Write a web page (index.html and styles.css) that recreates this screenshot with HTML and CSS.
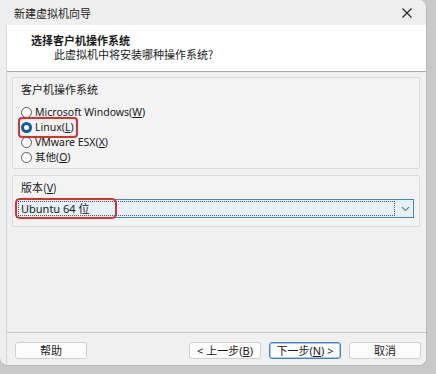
FILE: index.html
```html
<!DOCTYPE html>
<html lang="zh-CN">
<head>
<meta charset="utf-8">
<title>新建虚拟机向导</title>
<link rel="stylesheet" href="styles.css">
</head>
<body>
<div class="window">
  <div class="titlebar">
    <span class="title">新建虚拟机向导</span>
    <svg class="close" width="10" height="10" viewBox="0 0 10 10"><path d="M0.5 0.5L9.5 9.5M9.5 0.5L0.5 9.5" stroke="#222" stroke-width="1.1" fill="none"/></svg>
  </div>
  <div class="client">
    <div class="header">
      <div class="h-title">选择客户机操作系统</div>
      <div class="h-sub">此虚拟机中将安装哪种操作系统?</div>
    </div>
    <div class="content">
      <div class="group g-os">
        <div class="glabel">客户机操作系统</div>
        <div class="radios">
          <div class="radio"><span class="dot"></span><span>Microsoft Windows(<u>W</u>)</span></div>
          <div class="radio mark"><span class="dot on"></span><span>Linux(<u>L</u>)</span></div>
          <div class="radio"><span class="dot"></span><span>VMware ESX(<u>X</u>)</span></div>
          <div class="radio"><span class="dot"></span><span>其他(<u>O</u>)</span></div>
        </div>
      </div>
      <div class="group g-ver">
        <div class="glabel">版本(<u>V</u>)</div>
        <div class="combo">
          <div class="combo-text"><span class="mark2">Ubuntu 64 位</span></div>
          <svg class="chev" width="9" height="6" viewBox="0 0 9 6"><path d="M1 1.2L4.5 4.6L8 1.2" stroke="#777" stroke-width="1.1" fill="none"/></svg>
        </div>
      </div>
    </div>
    <div class="footer">
      <button class="btn">帮助</button>
      <div class="spacer"></div>
      <button class="btn">&lt; 上一步(<u>B</u>)</button>
      <button class="btn primary">下一步(<u>N</u>) &gt;</button>
      <button class="btn">取消</button>
    </div>
  </div>
</div>
</body>
</html>
```
FILE: styles.css
```css
html, body {
  margin: 0;
  padding: 0;
}
body {
  width: 436px;
  height: 374px;
  background: #c9c9c9;
  font-family: "Noto Sans", "Noto Sans CJK SC", sans-serif;
  font-size: 11px;
  color: #1a1a1a;
  overflow: hidden;
}
.window {
  width: 427px;
  height: 366px;
  background: #eeeeee;
  border-radius: 0 8px 8px 8px;
  border-right: 1px solid #b8b8b8;
  border-bottom: 1px solid #b8b8b8;
  box-sizing: border-box;
  display: flex;
  flex-direction: column;
  overflow: hidden;
}
.titlebar {
  height: 25px;
  flex: none;
  display: flex;
  align-items: center;
  padding: 0 12px 0 14px;
  background: #efefef;
}
.title {
  flex: 1;
  font-family: "Noto Sans CJK SC", sans-serif;
  font-size: 11px;
  color: #222;
}
.close {
  display: block;
  margin-right: 2px;
}
.client {
  flex: 1;
  display: flex;
  flex-direction: column;
  margin-left: 6px;
  border-left: 1px solid #d6d6d6;
  background: #f0f0f0;
}
.header {
  height: 47px;
  flex: none;
  background: #ffffff;
  border-bottom: 1px solid #a9a9a9;
  box-sizing: border-box;
  padding: 8px 0 0 24px;
  font-family: "Noto Sans CJK SC", sans-serif;
}
.h-title {
  font-weight: bold;
  font-size: 11px;
  line-height: 14px;
}
.h-sub {
  font-size: 11px;
  line-height: 14px;
  margin-left: 23px;
}
.content {
  padding: 5px 6px 0 5px;
  display: flex;
  flex-direction: column;
  gap: 6px;
  flex: 1;
}
.group {
  border: 1px solid #dcdcdc;
  border-radius: 2px;
  background: #f3f3f3;
  padding: 3px 8px 0 8px;
}
.g-os {
  height: 92px;
  box-sizing: border-box;
}
.g-ver {
  height: 52px;
  box-sizing: border-box;
  padding-left: 3px;
  padding-right: 5px;
}
.glabel {
  font-family: "Noto Sans CJK SC", sans-serif;
  line-height: 16px;
  padding-left: 0;
}
.g-ver .glabel {
  padding-left: 5px;
}
.radios {
  margin-top: 8px;
  display: flex;
  flex-direction: column;
}
.radio {
  display: flex;
  align-items: center;
  gap: 3px;
  height: 15px;
  line-height: 15px;
  width: max-content;
  font-family: "Noto Sans", "Noto Sans CJK SC", sans-serif;
  font-size: 10.5px;
}
.radio.mark {
  outline: 2px solid #d8312c;
  outline-offset: 1px;
  border-radius: 1px;
  padding-right: 1px;
}
.dot {
  width: 11px;
  height: 11px;
  border-radius: 50%;
  border: 1px solid #5c5c5c;
  background: #ffffff;
  box-sizing: border-box;
  flex: none;
}
.dot.on {
  border: 3px solid #0b5cad;
  background: #ffffff;
}
u {
  text-decoration-thickness: 1px;
  text-underline-offset: 1px;
}
.combo {
  margin-top: 4px;
  height: 19px;
  border: 1px solid #3d88c6;
  background: #e5f1fb;
  box-sizing: border-box;
  display: flex;
  align-items: center;
  padding: 1px;
}
.combo-text {
  flex: 1;
  height: 15px;
  border: 1px dotted #555;
  box-sizing: border-box;
  display: flex;
  align-items: center;
  margin-right: 6px;
}
.mark2 {
  font-family: "Noto Sans", "Noto Sans CJK SC", sans-serif;
  line-height: 13px;
  width: 92px;
  padding-left: 2px;
  outline: 2px solid #d8312c;
  outline-offset: 2px;
  border-radius: 1px;
}
.chev {
  margin-right: 2px;
  display: block;
}
.footer {
  height: 33px;
  flex: none;
  border-top: 1px solid #c8c8c8;
  box-sizing: border-box;
  display: flex;
  align-items: flex-start;
  padding: 9px 5px 0 8px;
  gap: 8px;
}
.spacer {
  flex: 1;
}
.btn {
  width: 72px;
  height: 17px;
  border: 1px solid #d0d0d0;
  border-radius: 3px;
  background: #fdfdfd;
  font-family: "Noto Sans", "Noto Sans CJK SC", sans-serif;
  font-size: 11px;
  line-height: 15px;
  color: #1a1a1a;
  padding: 0;
  margin: 0;
}
.btn.primary {
  border: 1px solid #3f7fc0;
  box-shadow: inset 0 0 0 1px #a9cbe8;
}
```
